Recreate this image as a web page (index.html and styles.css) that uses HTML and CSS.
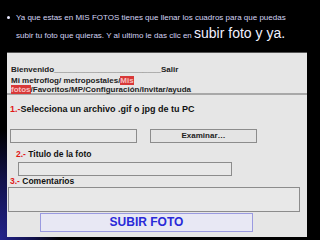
FILE: index.html
```html
<!DOCTYPE html>
<html>
<head>
  <title>Mis fotos</title>
  <link rel="stylesheet" href="styles.css">
</head>
<body>
  <ul class="intro">
    <li><span>Ya que estas en MIS FOTOS tienes que llenar los cuadros para que puedas</span><br><span>subir tu foto que quieras. Y al ultimo le das clic en</span> <span class="big">subir foto y ya.</span></li>
  </ul>

  <div class="panel">
    <div class="head">
      <p>Bienvenido________________________Salir</p>
      <p>Mi metroflog/ metropostales/<span class="mark">Mis</span><br><span class="mark">fotos</span>/Favoritos/MP/Configuración/Invitar/ayuda</p>
    </div>

    <div class="form">
      <p class="step one"><span class="num">1.-</span>Selecciona un archivo .gif o jpg de tu PC</p>
      <div class="file-row">
        <div class="field file"></div>
        <div class="browse">Examinar…</div>
      </div>

      <p class="step two"><span class="num">2.-</span> Titulo de la foto</p>
      <div class="field title"></div>

      <p class="step three"><span class="num">3.-</span> Comentarios</p>
      <div class="field comments"></div>

      <div class="submit">SUBIR FOTO</div>
    </div>
  </div>
</body>
</html>
```

FILE: styles.css
```css
body {
  margin: 0;
  width: 320px;
  height: 240px;
  overflow: hidden;
  font-family: 'Liberation Sans', Arial, sans-serif;
  background-color: #000;
  background-image: radial-gradient(ellipse 60px 110px at 0 240px, #23238c 0%, #12124a 55%, #000 100%);
}

.intro {
  margin: 0;
  padding: 9px 20px 0 16px;
  height: 43px;
  list-style: none;
  color: #d4d4f4;
  font-size: 8px;
  line-height: 17px;
}

.intro li {
  position: relative;
}

.intro li::before {
  content: "";
  position: absolute;
  left: -9px;
  top: 7px;
  width: 3px;
  height: 3px;
  border-radius: 50%;
  background-color: #e8e8ff;
}

.big {
  font-size: 14px;
  line-height: 1;
  color: #f0f0ff;
}

.panel {
  margin-left: 7px;
  width: 300px;
  height: 185px;
  background-color: #e6e6e6;
  border-top: 1px solid #555;
  box-sizing: border-box;
}

.head {
  padding: 12px 0 4px 4px;
  border-bottom: 2px solid #a8a8a8;
  height: 42px;
  box-sizing: border-box;
  font-size: 8px;
  font-weight: bold;
  color: #222;
}

.head p {
  margin: 0;
  line-height: 9px;
}

.head p:first-child {
  margin-bottom: 2px;
}

.mark {
  background-color: #d83838;
  color: #f6c0c0;
}

.form {
  display: flex;
  flex-direction: column;
}

.step {
  margin: 0;
  font-weight: bold;
  color: #111;
}

.num {
  color: #e01818;
}

.one {
  margin-top: 8px;
  padding-left: 3px;
  font-size: 9px;
  line-height: 12px;
}

.two {
  margin-top: 6px;
  padding-left: 9px;
  font-size: 8.5px;
  line-height: 11px;
}

.three {
  margin-top: 0;
  padding-left: 3px;
  font-size: 8.5px;
  line-height: 10px;
}

.field {
  background-color: #e8e8e8;
  border: 1px solid #8c8c8c;
  box-sizing: border-box;
}

.file-row {
  display: flex;
  gap: 13px;
  margin-top: 14px;
  padding-left: 3px;
}

.file {
  width: 127px;
  height: 14px;
}

.browse {
  width: 107px;
  height: 14px;
  box-sizing: border-box;
  border: 1px solid #8c8c8c;
  background-color: #e4e4e4;
  font-size: 8px;
  font-weight: bold;
  line-height: 12px;
  text-align: center;
  color: #222;
}

.title {
  margin: 2px 0 0 11px;
  width: 214px;
  height: 14px;
}

.comments {
  margin: 1px 0 0 1px;
  width: 292px;
  height: 25px;
}

.submit {
  margin: 1px 0 0 33px;
  width: 213px;
  height: 19px;
  box-sizing: border-box;
  border: 1px solid #9a9ae0;
  background-color: #e8e8f4;
  color: #2a2ad8;
  font-size: 12px;
  font-weight: bold;
  line-height: 17px;
  text-align: center;
}
```
